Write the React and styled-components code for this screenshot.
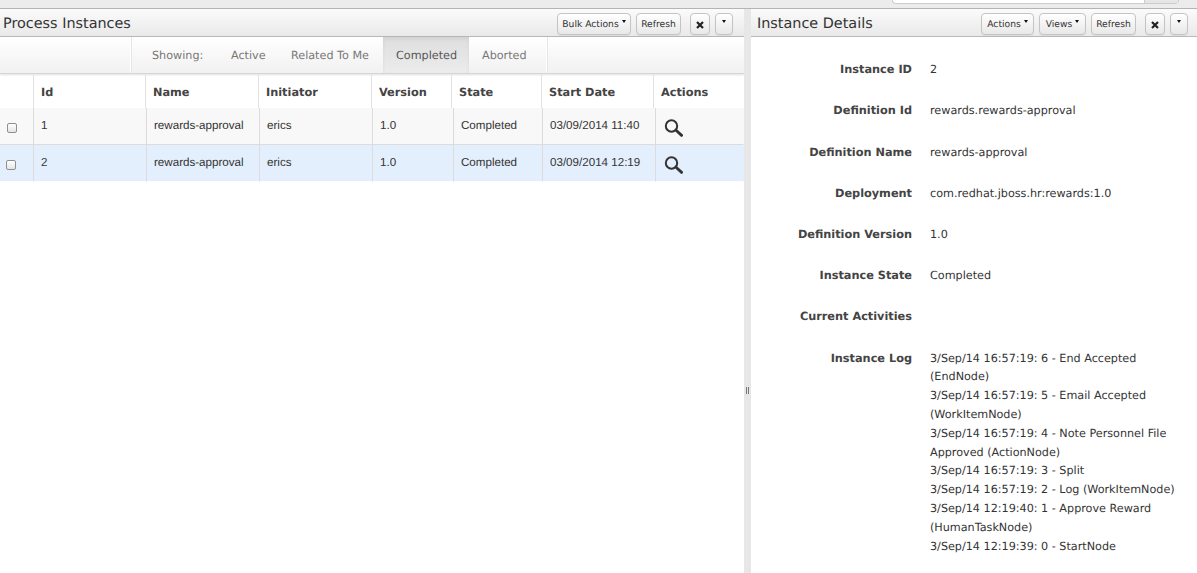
import React from "react";
import styled, { createGlobalStyle } from "styled-components";

const Global = createGlobalStyle`
  html, body { margin: 0; padding: 0; background: #fff; height: 100%; overflow: hidden; }
  * { box-sizing: border-box; }
  body { font-family: "DejaVu Sans", "Open Sans", sans-serif; color: #333; text-rendering: geometricPrecision; }
`;

const Page = styled.div`
  width: 1197px; height: 573px; display: flex; flex-direction: column; overflow: hidden;
`;
const TopStrip = styled.div`
  height: 9px; flex: none; background: #ececec; border-bottom: 1px solid #b4b4b4;
  display: flex; justify-content: flex-end; padding-right: 18px;
`;
const SearchStub = styled.div`
  width: 287px; height: 4px; display: flex; background: #fff;
  border: 1px solid #ccc; border-top: 0; border-radius: 0 0 4px 4px; justify-content: flex-end;
`;
const SearchAddon = styled.div`
  width: 34px; background: #e6e6e6; border-left: 1px solid #ccc;
`;
const Panels = styled.div`
  flex: 1; display: flex; min-height: 0;
`;
const LeftPanel = styled.section`
  width: 744px; flex: none; display: flex; flex-direction: column;
`;
const RightPanel = styled.section`
  flex: 1; min-width: 0; display: flex; flex-direction: column;
`;
const Splitter = styled.div`
  width: 7px; flex: none; background: #e7e7e7; display: flex; align-items: flex-start;
  justify-content: center; gap: 1px; padding-top: 378px;
`;
const Grip = styled.i`
  width: 1px; height: 7px; background: #777;
`;
const PanelHeader = styled.header`
  height: 28px; flex: none; display: flex; align-items: center; justify-content: space-between;
  padding: 2px ${p => p.$right}px 0 ${p => p.$left}px;
  background: linear-gradient(#fbfbfb, #e9e9e9);
  border-bottom: 1px solid #b9b9b9;
`;
const Title = styled.h2`
  margin: 0; font-size: 14.4px; line-height: 28px; font-weight: 400; color: #333;
  white-space: nowrap;
`;
const Toolbar = styled.div`
  display: flex; align-items: center; gap: 5px;
`;
const Btn = styled.button`
  height: 22px; width: ${p => p.$w}px; padding: 2px 0 0; display: inline-flex; align-items: center; justify-content: center;
  gap: 3px; font: 400 9.2px "DejaVu Sans", sans-serif; color: #333; text-rendering: geometricPrecision;
  background: linear-gradient(#fff, #e8e8e8);
  border: 1px solid #c4c4c4; border-radius: 4px; box-shadow: 0 1px 1px rgba(0,0,0,.06);
  white-space: nowrap;
  margin-left: ${p => p.$ml ?? 0}px;
`;
const Caret = styled.span`
  width: 0; height: 0; border-left: 2.5px solid transparent; border-right: 2.5px solid transparent;
  border-top: 3px solid #111; margin-top: -6px;
`;
const Nav = styled.nav`
  height: 37px; flex: none; display: flex; background: linear-gradient(#fff, #f1f1f1);
  border-bottom: 1px solid #d6d6d6; box-shadow: 0 1px 2px rgba(0,0,0,.12);
  font-size: 11.2px; color: #777;
`;
const NavBlank = styled.div`
  width: 131px; border-right: 1px solid #fff; box-shadow: 1px 0 0 #e6e6e6;
`;
const NavItem = styled.div`
  width: ${p => p.$w}px; padding-left: ${p => p.$pad}px; line-height: 37px; white-space: nowrap;
  ${p => p.$active && `background: linear-gradient(#dedede, #ececec); color: #555; box-shadow: inset 0 2px 4px rgba(0,0,0,.06);`}
  ${p => p.$last && `border-right: 1px solid #fff; box-shadow: 1px 0 0 #e6e6e6;`}
`;
const HeadGrid = styled.div`
  display: grid; grid-template-columns: 34px 112px 113px 113px 80px 90px 112px 90px; margin-top: 1px;
`;
const RowGrid = styled.div`
  display: grid; grid-template-columns: 34px 113px 113px 113px 81px 89px 113px 88px;
`;
const HeadCell = styled.div`
  height: 33px; padding-left: 7px; font: 700 11.3px/35px "DejaVu Sans", sans-serif; color: #444;
  border-right: 1px solid ${p => p.$last ? "transparent" : "#e2e2e2"}; white-space: nowrap;
`;
const Cell = styled.div`
  height: 37px; display: flex; align-items: center; padding: 0 0 1px 7px;
  font: 400 11.6px "Liberation Sans", Arial, sans-serif; color: #333;
  background: ${p => p.$sel ? "#e3effc" : "#f8f8f8"};
  border-right: 1px solid ${p => p.$last ? "transparent" : "#dcdcdc"};
  border-bottom: 1px solid ${p => p.$sel ? "#fff" : "#dcdcdc"}; white-space: nowrap;
`;
const CheckCell = styled(Cell)`
  padding: 3px 0 0 ${p => p.$sel ? 6 : 7}px;
`;
const IconCell = styled(Cell)`
  padding: 7px 0 3px 8px;
`;
const Check = styled.span`
  width: 10px; height: 10px; border: 1px solid #8f8f8f; border-radius: 2px;
  background: linear-gradient(#fff, #e4e4e4);
`;
const Details = styled.dl`
  margin: 0; display: grid; grid-template-columns: 161px 1fr; column-gap: 18px;
  padding-top: 24.3px; font-size: 11.2px; line-height: 18.8px; color: #333;
`;
const Term = styled.dt`
  font: 700 11.3px/18.8px "DejaVu Sans", sans-serif; color: #444; text-align: right; white-space: nowrap;
  margin-bottom: 22.4px;
`;
const Def = styled.dd`
  margin: 0 0 22.4px; padding-right: 12px;
`;

const Search = () => (
  <svg width="19" height="18" viewBox="0 0 19 18" fill="none" stroke="#333">
    <circle cx="7.5" cy="7" r="5.7" strokeWidth="2" />
    <path d="M12 11.3 L17.6 16.4" strokeWidth="2.8" strokeLinecap="round" />
  </svg>
);
const Close = () => (
  <svg width="8" height="8" viewBox="0 0 8 8" stroke="#222" strokeWidth="2.2"><path d="M1 1 L7 7 M7 1 L1 7" /></svg>
);

const cols = ["Id", "Name", "Initiator", "Version", "State", "Start Date", "Actions"];
const rows = [
  { id: "1", date: "03/09/2014 11:40" },
  { id: "2", date: "03/09/2014 12:19", sel: true },
];
const details = [
  ["Instance ID", "2"],
  ["Definition Id", "rewards.rewards-approval"],
  ["Definition Name", "rewards-approval"],
  ["Deployment", "com.redhat.jboss.hr:rewards:1.0"],
  ["Definition Version", "1.0"],
  ["Instance State", "Completed"],
  ["Current Activities", "\u00a0"],
];
const log = [
  "3/Sep/14 16:57:19: 6 - End Accepted (EndNode)",
  "3/Sep/14 16:57:19: 5 - Email Accepted (WorkItemNode)",
  "3/Sep/14 16:57:19: 4 - Note Personnel File Approved (ActionNode)",
  "3/Sep/14 16:57:19: 3 - Split",
  "3/Sep/14 16:57:19: 2 - Log (WorkItemNode)",
  "3/Sep/14 12:19:40: 1 - Approve Reward (HumanTaskNode)",
  "3/Sep/14 12:19:39: 0 - StartNode",
];

export default function App() {
  return (
    <Page>
      <Global />
      <TopStrip><SearchStub><SearchAddon /></SearchStub></TopStrip>
      <Panels>
        <LeftPanel>
          <PanelHeader $left={3} $right={11}>
            <Title>Process Instances</Title>
            <Toolbar>
              <Btn $w={74}>Bulk Actions <Caret /></Btn>
              <Btn $w={45}>Refresh</Btn>
              <Btn $w={20} $ml={4}><Close /></Btn>
              <Btn $w={18}><Caret /></Btn>
            </Toolbar>
          </PanelHeader>
          <Nav>
            <NavBlank />
            <NavItem $w={79} $pad={21}>Showing:</NavItem>
            <NavItem $w={60} $pad={21}>Active</NavItem>
            <NavItem $w={113} $pad={21}>Related To Me</NavItem>
            <NavItem $w={86} $pad={13} $active>Completed</NavItem>
            <NavItem $w={78} $pad={13} $last>Aborted</NavItem>
          </Nav>
          <HeadGrid>
            <HeadCell />
            {cols.map((c, i) => <HeadCell key={c} $last={i === 6}>{c}</HeadCell>)}
          </HeadGrid>
          <RowGrid>
            {rows.map(r => (
              <React.Fragment key={r.id}>
                <CheckCell $sel={r.sel}><Check /></CheckCell>
                <Cell $sel={r.sel}>{r.id}</Cell>
                <Cell $sel={r.sel}>rewards-approval</Cell>
                <Cell $sel={r.sel}>erics</Cell>
                <Cell $sel={r.sel}>1.0</Cell>
                <Cell $sel={r.sel}>Completed</Cell>
                <Cell $sel={r.sel}>{r.date}</Cell>
                <IconCell $sel={r.sel} $last><Search /></IconCell>
              </React.Fragment>
            ))}
          </RowGrid>
        </LeftPanel>
        <Splitter><Grip /><Grip /></Splitter>
        <RightPanel>
          <PanelHeader $left={6} $right={9}>
            <Title>Instance Details</Title>
            <Toolbar>
              <Btn $w={53}>Actions <Caret /></Btn>
              <Btn $w={47}>Views <Caret /></Btn>
              <Btn $w={45}>Refresh</Btn>
              <Btn $w={20} $ml={4}><Close /></Btn>
              <Btn $w={18}><Caret /></Btn>
            </Toolbar>
          </PanelHeader>
          <Details>
            {details.map(([k, v]) => (
              <React.Fragment key={k}>
                <Term>{k}</Term>
                <Def>{v}</Def>
              </React.Fragment>
            ))}
            <Term>Instance Log</Term>
            <Def>{log.map(l => <div key={l}>{l}</div>)}</Def>
          </Details>
        </RightPanel>
      </Panels>
    </Page>
  );
}
